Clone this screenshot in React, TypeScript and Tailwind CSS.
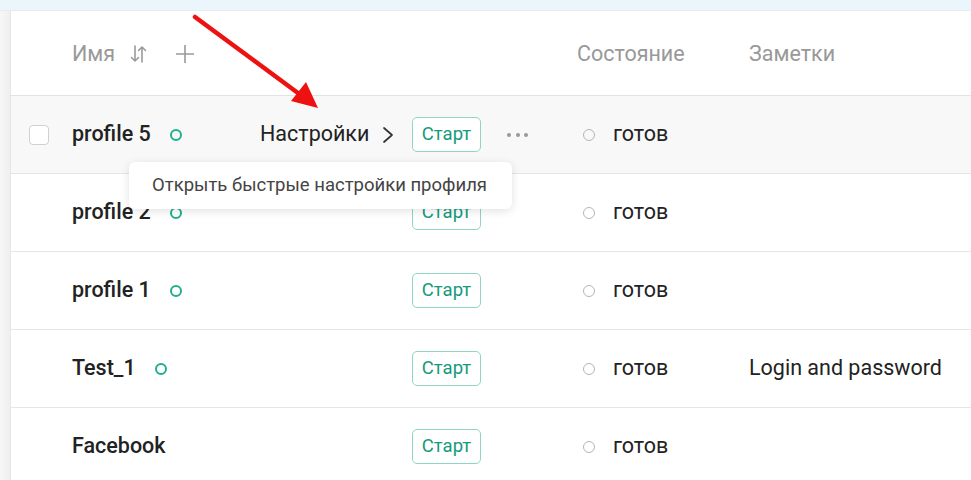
import React from 'react';

type Row = {
  name: string;
  online: boolean;
  notes?: string;
  hovered?: boolean;
};

const rows: Row[] = [
  { name: 'profile 5', online: true, hovered: true },
  { name: 'profile 2', online: true },
  { name: 'profile 1', online: true },
  { name: 'Test_1', online: true, notes: 'Login and password' },
  { name: 'Facebook', online: false },
];

function SortIcon() {
  return (
    <svg width="18" height="20" viewBox="0 0 18 20" fill="none" stroke="#9a9a9a" strokeWidth="1.6" strokeLinecap="round" strokeLinejoin="round">
      <path d="M5 2v15M1.5 13.5 5 17l3.5-3.5" />
      <path d="M12 18V3M8.5 6.5 12 3l3.5 3.5" />
    </svg>
  );
}

function PlusIcon() {
  return (
    <svg width="20" height="20" viewBox="0 0 20 20" fill="none" stroke="#9a9a9a" strokeWidth="1.6">
      <path d="M10 1v18M1 10h18" />
    </svg>
  );
}

function Chevron() {
  return (
    <svg width="12" height="18" viewBox="0 0 12 18" fill="none" stroke="#333" strokeWidth="1.7" strokeLinecap="round" strokeLinejoin="round">
      <path d="M2 2l8 7-8 7" />
    </svg>
  );
}

function ProfileRow({ row }: { row: Row }) {
  return (
    <div
      className={`flex h-[78px] items-center border-b border-[#e6e6e6] ${
        row.hovered ? 'bg-[#f8f8f8]' : 'bg-white'
      }`}
    >
      <div className="flex w-[61px] shrink-0 items-center pl-[18px]">
        {row.hovered && (
          <div className="h-5 w-5 rounded-[4px] border border-[#d0d0d0] bg-white" />
        )}
      </div>
      <div className="flex w-[188px] shrink-0 items-center gap-[19px]">
        <span className="text-[21.5px] font-medium text-[#222]">{row.name}</span>
        {row.online && (
          <span className="h-[12px] w-[12px] rounded-full border-2 border-[#1fae8e]" />
        )}
      </div>
      <div className="flex w-[152px] shrink-0 items-center gap-[13px]">
        {row.hovered && (
          <>
            <span className="text-[21.5px] text-[#222]">Настройки</span>
            <Chevron />
          </>
        )}
      </div>
      <div className="flex w-[165px] shrink-0 items-center">
        <button className="flex h-[35px] w-[69px] items-center justify-center rounded-[5px] border border-[#8fd6c3] bg-white text-[18.5px] text-[#159a7c]">
          Старт
        </button>
        {row.hovered && (
          <div className="ml-[26px] flex items-center gap-[4.5px]">
            <span className="h-[4px] w-[4px] rounded-full bg-[#999]" />
            <span className="h-[4px] w-[4px] rounded-full bg-[#999]" />
            <span className="h-[4px] w-[4px] rounded-full bg-[#999]" />
          </div>
        )}
      </div>
      <div className="flex w-[172px] shrink-0 items-center gap-[18px] pl-[6px]">
        <span className="h-[12px] w-[12px] rounded-full border-[1.5px] border-[#b5b5b5]" />
        <span className="text-[21.5px] text-[#222]">готов</span>
      </div>
      <div className="flex-1 text-[21.5px] text-[#222]">{row.notes}</div>
    </div>
  );
}

export default function App() {
  return (
    <div
      className="relative h-[480px] w-[971px] overflow-hidden bg-white"
      style={{ fontFamily: 'Roboto, "Noto Sans", sans-serif' }}
    >
      <div className="h-[11px] border-b border-[#e8ecef] bg-[#eaf5fc]" />
      <div className="flex h-[469px]">
        <div className="w-[11px] shrink-0 border-r border-[#e6e6e6] bg-gradient-to-r from-[#f7f7f7] to-[#efefef]" />
        <div className="flex-1">
          <div className="flex h-[85px] items-center border-b border-[#e3e3e3] pt-[2px] text-[21.5px] text-[#999]">
            <div className="w-[61px] shrink-0" />
            <div className="flex w-[505px] shrink-0 items-center">
              <span>Имя</span>
              <span className="ml-[15px]"><SortIcon /></span>
              <span className="ml-[27px]"><PlusIcon /></span>
            </div>
            <div className="w-[172px] shrink-0">Состояние</div>
            <div className="flex-1">Заметки</div>
          </div>
          {rows.map((r) => (
            <ProfileRow key={r.name} row={r} />
          ))}
        </div>
      </div>

      <div className="absolute left-[129px] top-[162px] flex h-[47px] w-[383px] items-center rounded-[6px] bg-white pl-[23px] text-[18.5px] text-[#444] shadow-[0_2px_10px_rgba(0,0,0,0.12)]">
        Открыть быстрые настройки профиля
      </div>

      <svg className="absolute left-0 top-0" width="971" height="480" fill="none">
        <path d="M195 17 L302 96" stroke="#ee1111" strokeWidth="4.5" strokeLinecap="round" />
        <path d="M318 108 L291 101 L306 82 Z" fill="#ee1111" />
      </svg>
    </div>
  );
}
